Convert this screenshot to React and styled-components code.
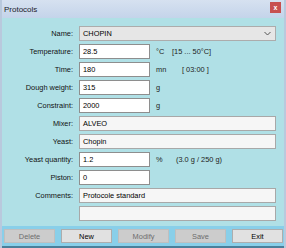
import React from "react";
import styled, { createGlobalStyle } from "styled-components";

const Global = createGlobalStyle`
  html, body { margin: 0; padding: 0; background: #ffffff; }
  body { font-family: "Liberation Sans", Arial, sans-serif; }
`;

const Window = styled.div`
  width: 286px;
  height: 248px;
  box-sizing: border-box;
  display: flex;
  flex-direction: column;
  background: #b0e0e6;
  border-left: 2px solid #b9c9dd;
  border-right: 2px solid #b9c9dd;
  overflow: hidden;
`;

const TitleBar = styled.div`
  height: 18px;
  flex: none;
  display: flex;
  align-items: center;
  justify-content: space-between;
  padding: 0 3px 0 2px;
  background: linear-gradient(#d6e1f0, #c4d4ea);
  font-size: 8px;
  color: #1b1b2a;
`;

const Close = styled.div`
  width: 11px;
  height: 11px;
  margin-top: -3px;
  background: #c75050;
  color: #fff;
  font-size: 7px;
  font-weight: bold;
  display: flex;
  align-items: center;
  justify-content: center;
  line-height: 1;
`;

const Form = styled.div`
  flex: 1;
  display: flex;
  flex-direction: column;
  padding: 6px 0 0 0;
`;

const Row = styled.div`
  height: 18px;
  display: flex;
  align-items: center;
  font-size: 7.4px;
  color: #111;
`;

const Label = styled.div`
  width: 71px;
  text-align: right;
  margin-right: 6px;
`;

const Field = styled.div`
  box-sizing: border-box;
  width: ${(p) => (p.$wide ? "197px" : "71px")};
  height: 15px;
  background: ${(p) => (p.$wide ? "#f6f6f6" : "#ffffff")};
  border: 1px solid ${(p) => (p.$wide ? "#a8a8a8" : "#8e8e8e")};
  padding: 0 3px;
  display: flex;
  align-items: center;
  font-size: 7.4px;
  color: #000;
`;

const Combo = styled(Field)`
  background: #e6e6e6;
  border-color: #acacac;
  justify-content: space-between;
  padding-right: 4px;
`;

const Unit = styled.div`
  width: 16px;
  margin-left: 6px;
  color: #222;
`;

const Extra = styled.div`
  margin-left: ${(p) => p.$offset || 0}px;
  color: #222;
`;

const ButtonBar = styled.div`
  height: 22px;
  flex: none;
  box-sizing: border-box;
  display: flex;
  align-items: center;
  gap: 6px;
  padding: 0 0 0 2px;
  background: #89cfe9;
  border-bottom: 2px solid #4a7f9a;
`;

const Button = styled.div`
  box-sizing: border-box;
  width: 51px;
  height: 14px;
  display: flex;
  align-items: center;
  justify-content: center;
  font-size: 7.4px;
  background: ${(p) => (p.$disabled ? "#cccccc" : "#e1e1e1")};
  border: 1px solid ${(p) => (p.$disabled ? "#bfbfbf" : "#adadad")};
  color: ${(p) => (p.$disabled ? "#6d6d6d" : "#000")};
`;

const Chevron = () => (
  <svg width="7" height="5" viewBox="0 0 7 5">
    <path d="M0.5 1 L3.5 4 L6.5 1" fill="none" stroke="#555" strokeWidth="1" />
  </svg>
);

export default function App() {
  return (
    <>
      <Global />
      <Window>
        <TitleBar>
          <span>Protocols</span>
          <Close>x</Close>
        </TitleBar>
        <Form>
          <Row>
            <Label>Name:</Label>
            <Combo $wide>
              <span>CHOPIN</span>
              <Chevron />
            </Combo>
          </Row>
          <Row>
            <Label>Temperature:</Label>
            <Field>28.5</Field>
            <Unit>°C</Unit>
            <Extra>[15 ... 50°C]</Extra>
          </Row>
          <Row>
            <Label>Time:</Label>
            <Field>180</Field>
            <Unit>mn</Unit>
            <Extra $offset={10}>[ 03:00 ]</Extra>
          </Row>
          <Row>
            <Label>Dough weight:</Label>
            <Field>315</Field>
            <Unit>g</Unit>
          </Row>
          <Row>
            <Label>Constraint:</Label>
            <Field>2000</Field>
            <Unit>g</Unit>
          </Row>
          <Row>
            <Label>Mixer:</Label>
            <Field $wide>ALVEO</Field>
          </Row>
          <Row>
            <Label>Yeast:</Label>
            <Field $wide>Chopin</Field>
          </Row>
          <Row>
            <Label>Yeast quantity:</Label>
            <Field>1.2</Field>
            <Unit>%</Unit>
            <Extra $offset={4}>(3.0 g / 250 g)</Extra>
          </Row>
          <Row>
            <Label>Piston:</Label>
            <Field>0</Field>
          </Row>
          <Row>
            <Label>Comments:</Label>
            <Field $wide>Protocole standard</Field>
          </Row>
          <Row>
            <Label />
            <Field $wide />
          </Row>
        </Form>
        <ButtonBar>
          <Button $disabled>Delete</Button>
          <Button>New</Button>
          <Button $disabled>Modify</Button>
          <Button $disabled>Save</Button>
          <Button>Exit</Button>
        </ButtonBar>
      </Window>
    </>
  );
}
